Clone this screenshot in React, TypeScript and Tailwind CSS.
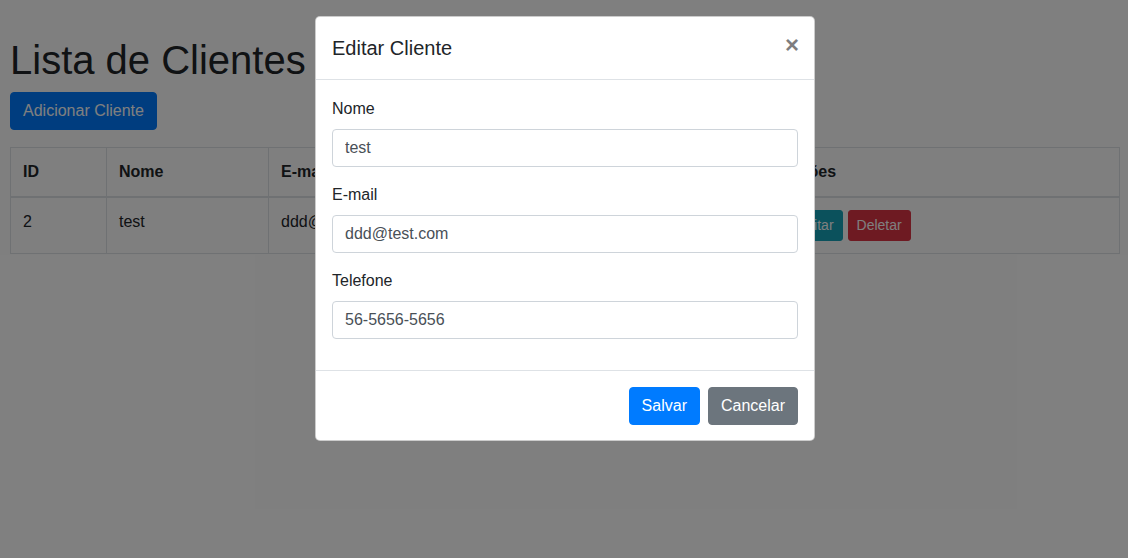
import React from "react";

const font = { fontFamily: '"Liberation Sans", Arial, sans-serif' };

function Field({ label, value }: { label: string; value: string }) {
  return (
    <div className="mb-4">
      <label className="block mb-2 text-[16px] leading-6 text-[#212529]">{label}</label>
      <input
        readOnly
        value={value}
        className="block w-full h-[38px] px-3 py-[6px] text-[16px] leading-6 text-[#495057] bg-white border border-[#ced4da] rounded-[4px] outline-none"
        style={font}
      />
    </div>
  );
}

export default function App() {
  return (
    <div className="relative w-[1128px] h-[558px] overflow-hidden bg-white text-[#212529]" style={font}>
      <div className="pl-[10px] pr-[8px] pt-[36px]">
        <h1 className="text-[40px] leading-[48px] font-normal mb-2">Lista de Clientes</h1>
        <button className="h-[38px] px-3 text-[16px] leading-6 text-white bg-[#007bff] border border-[#007bff] rounded-[4px] mb-[17px]">
          Adicionar Cliente
        </button>
        <table className="w-[1110px] table-fixed border-collapse text-[16px] leading-6">
          <colgroup>
            <col className="w-[96px]" />
            <col className="w-[162px]" />
            <col className="w-[252px]" />
            <col className="w-[255px]" />
            <col />
          </colgroup>
          <thead>
            <tr>
              <th className="text-left font-bold p-3 border border-[#dee2e6] border-b-2">ID</th>
              <th className="text-left font-bold p-3 border border-[#dee2e6] border-b-2">Nome</th>
              <th className="text-left font-bold p-3 border border-[#dee2e6] border-b-2">E-mail</th>
              <th className="text-left font-bold p-3 border border-[#dee2e6] border-b-2">Telefone</th>
              <th className="text-left font-bold p-3 border border-[#dee2e6] border-b-2">Ações</th>
            </tr>
          </thead>
          <tbody>
            <tr>
              <td className="p-3 border border-[#dee2e6] align-top">2</td>
              <td className="p-3 border border-[#dee2e6] align-top">test</td>
              <td className="p-3 border border-[#dee2e6] align-top">ddd@test.com</td>
              <td className="p-3 border border-[#dee2e6] align-top">56-5656-5656</td>
              <td className="p-3 border border-[#dee2e6] align-top">
                <div className="flex gap-[5px]">
                  <button className="h-[31px] px-2 text-[14px] leading-[21px] text-white bg-[#17a2b8] border border-[#17a2b8] rounded-[3px]">
                    Editar
                  </button>
                  <button className="h-[31px] px-2 text-[14px] leading-[21px] text-white bg-[#dc3545] border border-[#dc3545] rounded-[3px]">
                    Deletar
                  </button>
                </div>
              </td>
            </tr>
          </tbody>
        </table>
      </div>

      <div className="absolute inset-0 bg-black/50" />

      <div className="absolute left-[315px] top-[16px] w-[500px] bg-white border border-black/20 rounded-[5px]">
        <div className="flex items-start justify-between p-4 border-b border-[#dee2e6]">
          <h5 className="text-[20px] leading-[30px] font-normal text-[#212529]">Editar Cliente</h5>
          <button className="text-[24px] leading-none font-bold text-black opacity-50 -mr-px">×</button>
        </div>
        <div className="px-4 pt-[17px] pb-[15px]">
          <Field label="Nome" value="test" />
          <Field label="E-mail" value="ddd@test.com" />
          <Field label="Telefone" value="56-5656-5656" />
        </div>
        <div className="flex justify-end items-center gap-2 px-4 pt-4 pb-[15px] border-t border-[#dee2e6]">
          <button className="h-[38px] px-3 text-[16px] leading-6 text-white bg-[#007bff] border border-[#007bff] rounded-[4px]">
            Salvar
          </button>
          <button className="h-[38px] px-3 text-[16px] leading-6 text-white bg-[#6c757d] border border-[#6c757d] rounded-[4px]">
            Cancelar
          </button>
        </div>
      </div>
    </div>
  );
}
